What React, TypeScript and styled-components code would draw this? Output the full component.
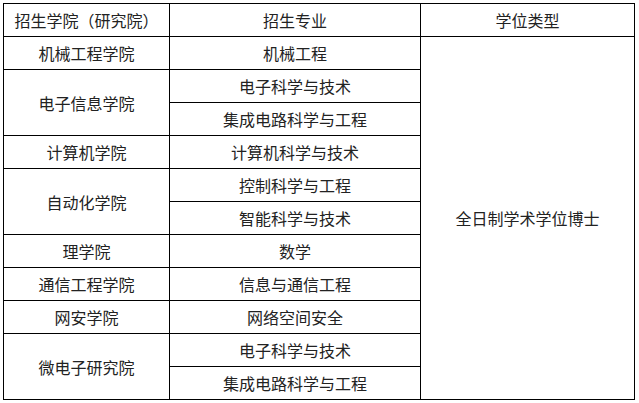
import React from "react";
import styled, { createGlobalStyle } from "styled-components";

const GlobalStyle = createGlobalStyle`
  html, body {
    margin: 0;
    padding: 0;
    background: #ffffff;
  }
  body {
    padding: 3px 0 0 3px;
    font-family: "Noto Sans CJK SC", "Noto Sans", sans-serif;
  }
`;

const Grid = styled.div`
  display: grid;
  grid-template-columns: 165px 250px 213px;
  grid-auto-rows: 32px;
  gap: 1px;
  padding: 1px;
  width: 632px;
  box-sizing: border-box;
  background: #000000;
`;

const Cell = styled.div<{ $col: number; $row: number; $span?: number }>`
  grid-column: ${(p) => p.$col};
  grid-row: ${(p) => p.$row} / span ${(p) => p.$span ?? 1};
  display: flex;
  align-items: center;
  justify-content: center;
  background: #ffffff;
  color: #222222;
  font-size: 16px;
  line-height: 1;
  white-space: nowrap;
`;

type Group = { school: string; majors: string[] };

const groups: Group[] = [
  { school: "机械工程学院", majors: ["机械工程"] },
  { school: "电子信息学院", majors: ["电子科学与技术", "集成电路科学与工程"] },
  { school: "计算机学院", majors: ["计算机科学与技术"] },
  { school: "自动化学院", majors: ["控制科学与工程", "智能科学与技术"] },
  { school: "理学院", majors: ["数学"] },
  { school: "通信工程学院", majors: ["信息与通信工程"] },
  { school: "网安学院", majors: ["网络空间安全"] },
  { school: "微电子研究院", majors: ["电子科学与技术", "集成电路科学与工程"] },
];

const App: React.FC = () => {
  let row = 2;
  const cells: React.ReactNode[] = [];
  groups.forEach((g, i) => {
    cells.push(
      <Cell key={`s${i}`} $col={1} $row={row} $span={g.majors.length}>
        {g.school}
      </Cell>
    );
    g.majors.forEach((m, j) => {
      cells.push(
        <Cell key={`m${i}-${j}`} $col={2} $row={row + j}>
          {m}
        </Cell>
      );
    });
    row += g.majors.length;
  });
  const totalRows = row - 2;

  return (
    <>
      <GlobalStyle />
      <Grid>
        <Cell $col={1} $row={1}>招生学院（研究院）</Cell>
        <Cell $col={2} $row={1}>招生专业</Cell>
        <Cell $col={3} $row={1}>学位类型</Cell>
        {cells}
        <Cell $col={3} $row={2} $span={totalRows}>
          全日制学术学位博士
        </Cell>
      </Grid>
    </>
  );
};

export default App;
